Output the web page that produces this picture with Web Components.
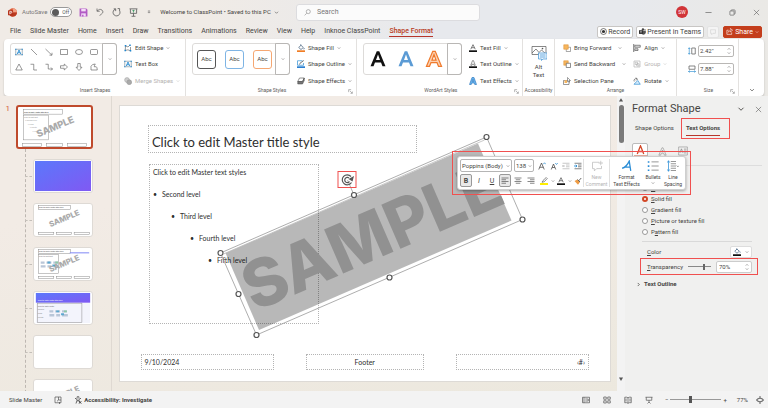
<!DOCTYPE html>
<html lang="en">
<head>
<meta charset="utf-8">
<title>Welcome to ClassPoint</title>
<style>
html,body{height:100%;margin:0}
body{font:6px/8px Roboto,"Liberation Sans",sans-serif;color:#454442;overflow:hidden}
</style>
</head>
<body>
<app-window></app-window>
<script>
const RESET = `*{box-sizing:border-box}button,input,select{font:inherit;color:inherit;margin:0;padding:0;border:0;background:none;min-width:0}button{display:inline-flex;align-items:center;white-space:nowrap}a{color:inherit;text-decoration:none}`;
function define(name, css, html) {
  customElements.define(name, class extends HTMLElement {
    constructor() {
      super();
      const t = document.createElement('template');
      t.innerHTML = `<style>${RESET}${css}</style>${typeof html === 'function' ? html(this) : html}`;
      this.attachShadow({mode: 'open'}).append(t.content.cloneNode(true));
    }
  });
}

/* Icons, all on a 16 by 16 grid */
const S = (d, c = '#555', w = 1.4, f = 'none') => `<path d="${d}" fill="${f}" stroke="${c}" stroke-width="${w}"/>`;
const LETTER = 'M2 13L7 1H9L14 13H11.6L10.4 10H5.6L4.4 13ZM6.4 8H9.6L8 3.6Z';
const ICONS = {
  logo: `<circle cx="8.5" cy="8" r="7.5" fill="#d95a38"/><path d="M8.5.5A7.5 7.5 0 0 1 16 8H8.5Z" fill="#f4a184"/><path d="M1.5 10A7.5 7.5 0 0 0 16 8H8z" fill="#b93a20"/><rect y="4" width="9" height="9" rx="1" fill="#b5331b"/><path d="M3.2 11V6H5.2a1.6 1.6 0 0 1 0 3.2H3.5" fill="none" stroke="#fff" stroke-width="1.3"/>`,
  save: `<path d="M1 1H13L15 3V15H1Z" fill="#b25ac4"/><path d="M4 1.6H12V6H4Z" fill="#f3dcf7"/><path d="M4 9.5H12V15H4Z" fill="#f3dcf7"/><path d="M5.5 12H8V15H5.5Z" fill="#b25ac4"/>`,
  undo: S('M2 1V6.5H7.5M2.4 6.2C5 2.5 9 1.6 12 4.2S14 10 11 12L7 15.4'),
  redo: S('M10 1H13.5V5M13.3 4.5A6.2 6.2 0 1 1 6 2M3 1.5H6.5V5.5'),
  show: S('M1 1.5H15M2.5 2V9.5H13.5V2M8 9.5V14.5M4.5 14.7H11.5','#555') + S('M8 3.5V8M6 5.5L8 3.4 10 5.5','#3a9a62'),
  more: S('M5 5H11','#555',1.2) + S('M5 8L8 11 11 8Z','#555',1.2),
  chev: S('M3 5.5L8 10.5 13 5.5','currentColor',1.8),
  chevr: S('M5.5 3L10.5 8 5.5 13','currentColor',2.4),
  chevu: S('M3 10.5L8 5.5 13 10.5','currentColor',1.8),
  search: `<circle cx="9.8" cy="6" r="4.6" fill="none" stroke="#777" stroke-width="1.2"/>` + S('M6.3 9.6L1.4 14.6','#777',1.2),
  min: S('M1 8H15'),
  restore: S('M2 5.5Q2 4.5 3 4.5H10.5Q11.5 4.5 11.5 5.5V13Q11.5 14 10.5 14H3Q2 14 2 13ZM5 4V3Q5 2 6 2H12Q14 2 14 4V10Q14 11.5 12 11.5'),
  close: S('M2 2L14 14M14 2L2 14','#555',1.3),
  rec: `<circle cx="8" cy="8" r="6.8" fill="none" stroke="#333" stroke-width="1.5"/><circle cx="8" cy="8" r="3.7" fill="#333"/>`,
  teams: `<circle cx="9" cy="3.5" r="2.8" fill="#444"/><circle cx="13.7" cy="4.5" r="1.9" fill="#666"/><path d="M6 7H15.5V11Q15 15 10.5 15.5 6 15 5.5 12Z" fill="#555"/><rect y="4.5" width="9" height="9" rx="1" fill="#333"/>` + S('M2.5 6.8H6.5M4.5 6.8V12','#fff',1.2),
  comment: S('M1.5 2H14.5V11.5H8L4.5 15V11.5H1.5Z','#c4c4c4',1.2),
  share: S('M6 5H2V14.5H13V10M4.5 10.5Q5 6.5 10 6.2V9L15 5 10 1.2V3.8','#fff',1.4),
  tbox: S('M1.5 2.5H14.5V13.5H1.5Z','#6a7f91',1.2) + `<path d="M.3 1.3h2.4v2.4H.3zM13.3 1.3h2.4v2.4h-2.4zM.3 12.3h2.4v2.4H.3zM13.3 12.3h2.4v2.4h-2.4z" fill="#1f86cf"/>` + S('M4.5 12L8 4 11.5 12M5.7 9.5H10.3','#1f86cf',1.7),
  line: S('M2 2L14 14','#555',1.2),
  arrow: S('M1 2L13.5 14M14 9.5V14.3H9','#555',1.2),
  rect: S('M1 3H15V13H1Z','#555',1.2),
  oval: `<ellipse cx="8" cy="8" rx="7" ry="5" fill="none" stroke="#555" stroke-width="1.2"/>`,
  round: `<rect x="1" y="3" width="14" height="10" rx="2" fill="none" stroke="#555" stroke-width="1.2"/>`,
  tri: S('M8 2L14.5 14H1.5Z','#555',1.2),
  elbow: S('M1 2.5H7.5V14H14','#555',1.2),
  elbowa: S('M1 2.5H6.5V12H15M12 9L15 12 12 15','#555',1.2),
  rarrow: S('M1 5.5H8.5V2L15 8 8.5 14V10.5H1Z','#555',1.2),
  darrow: S('M5.5 1H10.5V8.5H14L8 15 2 8.5H5.5Z','#555',1.2),
  free: S('M2 14V6.5Q4 2 10.5 2Q8 6 8.5 7.500H12.5Q14.500 8.500 14.500 14Z','#555',1.2),
  edit: S('M3 3.5L8 6 12 2M3 3.5L2.5 13Q8 10 13 13.5V6','#555',1.2) + `<path d="M1.5 2h3v3h-3zM1 11.5h3v3H1zM11.5 12h3v3h-3zM10.5 1h3v3h-3z" fill="#1f86cf"/>`,
  merge: `<circle cx="6" cy="6" r="4.8" fill="#ccc" stroke="#aaa" stroke-width="1.2"/><circle cx="10.5" cy="10.5" r="4.8" fill="#aaa" stroke="#999" stroke-width="1.2"/>`,
  fill: S('M3.5 7L8 2.5 12.5 7 8 11ZM7.5 3V.5M13.5 8Q15.5 10.5 13.5 10.6','#246', 1.3) + `<path d="M0 12.6H16V16H0Z" fill="#f07d24"/>`,
  fillk: S('M3.5 6.5L8 2 12.5 6.5 8 10.5ZM7.5 3V.5M13.5 7Q15.5 9.5 13.5 9.6','#357',1.3) + `<path d="M0 12.5H16V16H0Z" fill="#111"/>`,
  outline: S('M1 1.5H11M1 1.5V10.5H13V6','#1f86cf',1.3) + S('M5 9L6 6.5 13.5 1','#555',1.6) + `<path d="M0 12.6H16V16H0Z" fill="#2a7fd0"/>`,
  effects: `<path d="M5 2H14.5L11 9H1.5Z" fill="#fff" stroke="#555" stroke-width="1.3"/><path d="M1.5 9H11L14.5 2V7L11 14H1.5Z" fill="#777" stroke="#444"/>`,
  tfill: S('M3.5 10.5L8 1.3 12.5 10.5M5 7.4H11','#555',1.5) + `<path d="M0 12.6H16V16H0Z" fill="#111"/>`,
  toutline: S('M3.5 10.5L7 1.3H9L12.5 10.5H10L9 8H7L6 10.5Z','#555',1.2) + `<path d="M0 12.6H16V16H0Z" fill="#111"/>`,
  teffects: `<path d="M1 15L6 1H10L15 15H11.5L10.5 12H5.5L4.5 15ZM6.5 9H9.5L8 4.5Z" fill="#6cb5ee" stroke="#1668b5" stroke-width="1.1"/>`,
  artk: `<path d="${LETTER}" fill="#111"/>`,
  artb: `<path d="${LETTER}" fill="#5b9bd5"/>`,
  arto: `<path d="${LETTER}" fill="#fbd2b4" stroke="#f07a2c" stroke-width="1"/>`,
  alt: `<path d="M1 1.5H15V9.5H1Z" fill="#fff" stroke="#555" stroke-width=".7"/><path d="M1 8L5 4 8 7.5 10.5 5 15 9" fill="none" stroke="#555" stroke-width=".7"/><circle cx="11.5" cy="3.6" r=".8" fill="#555"/><path d="M7.5 8H16V14H12L10.5 15.5V14H7.5Z" fill="#eaf4fd" stroke="#3c93d6" stroke-width=".7"/>` + S('M9 10H14.5M9 12H14.5','#3c93d6',.7),
  fwd: `<path d="M6.5 6.5H15V15H6.5Z" fill="#fff" stroke="#555"/><path d="M1.5 1.5H10.5V10.5H1.5Z" fill="#f6b55d" stroke="#dc8c2d"/>`,
  back: `<path d="M1.5 1.5H10.5V10.5H1.5Z" fill="#f6b55d" stroke="#dc8c2d"/><path d="M6.5 6.5H15V15H6.5Z" fill="#fff" stroke="#555" stroke-width="1.3"/>`,
  pane: `<path d="M1 7H12V15H1Z" fill="#fff" stroke="#555" stroke-width="1.2"/><path d="M3 6.5H8V12H3Z" fill="#f6b55d"/><path d="M9 1L15 7H12L13.5 10 12 10.5 10.8 8 9 9.5Z" fill="#fff" stroke="#444"/>`,
  align: S('M1.5 0V16','#444',1.5) + S('M3.5 2.5H14.5V6.5H3.5ZM3.5 9.5H10V13H3.5Z','#555',1.3,'#dedede'),
  group: S('M2 2H14V14H2ZM4.5 4.5H9V9H4.5ZM7.5 7.5H12V12H7.5Z','#aaa',1.2),
  rotate: S('M2 14.5H14.5L9.5 7Z','#1f86cf',1.3,'#d9edfc') + S('M8.5 4A4 4 0 0 0 2.5 9M5.5 1.5L9 4 6 7','#555',1.3),
  height: S('M2.5 1.5V14.5M.5 4L2.5 1.5 4.5 4M.5 12L2.5 14.5 4.5 12','#1f86cf',1.2) + S('M7.5 2H14.5V14H7.5Z'),
  width: S('M2 2H14V8.5H2Z') + S('M1 13H15M3.5 11L1 13 3.5 15M12.5 11L15 13 12.5 15','#1f86cf',1.2),
  launch: S('M2 10V2H10M6 6L13 13M14 8V14H8','#555',1.3),
  grow: S('M1.5 15L7 2 12.5 15M3.5 10.5H10.5','#444',1.5) + S('M10.5 4.5L13 1.5 15.5 4.5','#1f86cf',1.4),
  shrink: S('M2.5 15L7 4 11.5 15M4.3 11H9.7','#444',1.5) + S('M10.5 2L13 5 15.5 2','#1f86cf',1.4),
  dedent: S('M1 2.5H15M8 6H15M8 9.5H15M1 13.5H15M6 8H1M3 6L1 8 3 10','#aaa',1.3),
  indent: S('M1 2.5H15M8 6H15M8 9.5H15M1 13.5H15') + S('M0 8H5.5M3.5 5.5L6 8 3.5 10.5','#1f86cf',1.7),
  aleft: S('M1 2H15M1 5.5H10M1 9H15M1 12.5H10'),
  acenter: S('M1 2H15M3.5 5.5H12.5M1 9H15M3.5 12.5H12.5'),
  aright: S('M1 2H15M6 5.5H15M1 9H15M6 12.5H15'),
  hilite: S('M4 10.5L6 7 12.5 1 14.5 3 8.5 9.5Z','#555',1.3) + `<path d="M0 12H16V16H0Z" fill="#ffee00"/>`,
  brush: `<path d="M1 8L7 5 12 10 8 15.5Z" fill="#ee9b43"/>` + S('M7 5L12 10M9.5 7.5L14.5 2','#666',2),
  newc: S('M11 3H2V11.500H4.500V14.500L7.500 11.500H14V8M13 1V7M10 4H16','#bbb',1),
  fte: S('M1.5 11Q7 10 11 1.5L13 14.5M5 9.5H12.2','#2b8dd6',1.7),
  bullets: S('M6 2.5H15.5M6 8H15.5M6 13.5H15.5','#666',.9) + `<path d="M1 1.5h2.2v2.2H1zM1 7h2.2v2.2H1zM1 12.5h2.2v2.2H1z" fill="#2b8dd6"/>`,
  spacing: S('M5 2H12M5 5H12M5 8H12M5 11H12M5 14H12','#666',.9) + S('M2 1V15M.3 3.5L2 1 3.7 3.5M.3 12.5L2 15 3.7 12.5','#2b8dd6',1) + S('M13 7.500L14.500 9 16 7.500','#555',.9),
  tA: S('M4 11L8 1 12 11M5.3 8H10.7','#d24726',1.6) + `<path d="M0 13H16V16H0Z" fill="#d24726"/>`,
  tB: S('M1.5 14.5L7 1.5H9L14.5 14.5H11.5L10 11H6L4.5 14.5ZM7 8.5H9L8 5.5Z','#888',1),
  tC: S('M1 1.5H15V14.5H1Z','#888',.9) + S('M3 11L5.5 4.5 8 11M4 9H7M9.5 5H13.5M9.5 8H13.5M9.5 11H13.5','#777',1),
  notes: S('M2 2H14V13.5H2ZM9 2V8L6 10.5M9 8L14 8') + S('M11 12V16','#555',1.5),
  access: `<circle cx="8" cy="2.5" r="2" fill="none" stroke="#444" stroke-width="1.3"/>` + S('M2 4.5L6 6.5V9L4 15M14 4.5L10 6.5V9L12 15M6 9.5H10','#444',1.6) + S('M10 10L15 15M15 10L10 15','#444',1.6),
  normal: S('M1 2.5H15V13.5H1ZM4 2.5V13.5M6.5 6H12.5V10H6.5') ,
  sorter: S('M1.5 2H6.5V6.5H1.5ZM9.5 2H14.5V6.5H9.5ZM1.5 9.5H6.5V14H1.5ZM9.5 9.5H14.5V14H9.5Z'),
  reading: S('M8 3.5Q4.5 1.5 1.5 2.5V13.5Q5 12.5 8 14.5 11 12.5 14.5 13.5V2.5Q11.5 1.5 8 3.5ZM8 3.5V14.5M4 5V11M12 5V11'),
  slideshow: S('M1 2.5H15M2.5 2.5V8.5H13.5V2.5M8 8.5V12M5 15L8 12 11 15'),
  fit: S('M3.5 5H12.5V11H3.5Z','#444',1.4) + `<path d="M8 0L10.5 3H5.5ZM8 16L5.5 13H10.5ZM0 8L2.5 5.5V10.5ZM16 8L13.5 10.5V5.5Z" fill="#444"/>`,
  up: `<path d="M8 3L13.5 12H2.5Z" fill="#555"/>`,
  down: `<path d="M8 13L2.5 4H13.5Z" fill="#555"/>`
};
customElements.define('ui-icon', class extends HTMLElement {
  constructor() { super(); this.attachShadow({mode: 'open'}); }
  connectedCallback() {
    const s = this.getAttribute('size') || 8;
    this.shadowRoot.innerHTML = `<style>:host{display:inline-block;flex:none;width:${s}px;height:${s}px}svg{display:block;width:100%;height:100%}</style><svg viewBox="0 0 16 16" aria-hidden="true">${ICONS[this.getAttribute('name')] || ''}</svg>`;
  }
});
const I = (n, s = 8) => `<ui-icon name="${n}" size="${s}"></ui-icon>`;

/* Ribbon pieces */
customElements.define('ribbon-command', class extends HTMLElement {
  constructor() { super(); this.attachShadow({mode: 'open'}); }
  connectedCallback() {
    const menu = this.hasAttribute('menu');
    this.shadowRoot.innerHTML = `<style>${RESET}:host{display:block}button{gap:3px;height:9px}button:disabled{color:#b5b3b1}:host([wide]) .m{margin-left:4px}.m{display:flex}</style>
      <button ${this.hasAttribute('off') ? 'disabled' : ''}>${I(this.getAttribute('icon'))}<slot></slot>${menu ? `<span class="m">${I('chev', 4)}</span>` : ''}</button>`;
  }
});
define('command-list', `:host{display:flex;flex-direction:column;gap:6px;align-items:flex-start}`, `<slot></slot>`);
customElements.define('ribbon-group', class extends HTMLElement {
  constructor() { super(); this.attachShadow({mode: 'open'}); }
  connectedCallback() {
    this.shadowRoot.innerHTML = `<style>${RESET}:host{display:grid;grid-template-rows:1fr 8px;padding:4px 6px 2px;min-width:0;position:relative;border-right:1px solid #e3e1df}
      .body{display:flex;gap:7px;align-items:flex-start}.foot{display:flex;justify-content:center;color:#5c5a58;font-size:5px;line-height:7px;white-space:nowrap}
      .l{position:absolute;right:3px;bottom:3px}:host([tight]){padding-inline:1px}:host([tight]) .body{justify-content:center}</style>
      <div class="body"><slot></slot></div><div class="foot">${this.getAttribute('label')}</div>${this.hasAttribute('launcher') ? `<button class="l" aria-label="${this.getAttribute('label')} options">${I('launch', 5)}</button>` : ''}`;
  }
});
define('gallery-box', `:host{display:flex;flex:none;height:32px;border:1px solid #dddbd9;border-radius:3px;background:#fff}
  .items{flex:1;display:flex;align-items:center;justify-content:center}.drop{width:15px;border:1px solid #b9b7b5;border-radius:0 3px 3px 0;margin:-1px;justify-content:center}`,
  `<div class="items"><slot></slot></div><button class="drop" aria-label="More styles">${I('chev', 4)}</button>`);
define('shape-grid', `:host{display:grid;grid-template-columns:repeat(6,8px);gap:7px;padding:0 5px 0 4px}`,
  ['tbox','line','arrow','rect','oval','round','tri','elbow','elbowa','rarrow','darrow','free'].map(n => `<button aria-label="${n}">${I(n)}</button>`).join(''));
define('style-swatches', `:host{display:flex;gap:9px;padding:0 4px}button{width:19px;height:19px;border:1px solid #555;border-radius:3px;justify-content:center;font-size:6px}button:nth-of-type(2){border-color:#7eb4e4}button:nth-of-type(3){border-color:#f5a772}`,
  `<button>Abc</button><button>Abc</button><button>Abc</button>`);
define('art-swatches', `:host{display:flex;gap:8px;padding:2px 4px 0}`, `<button aria-label="Black">${I('artk',20)}</button><button aria-label="Blue">${I('artb',20)}</button><button aria-label="Orange">${I('arto',20)}</button>`);
define('size-fields', `:host{display:grid;gap:6px;padding:2px 0 0 5px}label{display:flex;align-items:center;gap:2px}.f{display:flex;align-items:center;width:36px;height:12px;border:1px solid #b9b7b5;border-radius:2px;padding:0 2px 0 1px}input{width:100%;flex:1}.s{display:grid}`,
  `<label>${I('height')}<span class="f"><input aria-label="Height" value='2.42"'><span class="s">${I('chevu',4)}${I('chev',4)}</span></span></label>
   <label>${I('width')}<span class="f"><input aria-label="Width" value='7.88"'><span class="s">${I('chevu',4)}${I('chev',4)}</span></span></label>`);
define('alt-text', `:host{display:block}button{flex-direction:column;line-height:8px;padding-top:2px}ui-icon{margin-bottom:2px}`, `<button>${I('alt',16)}<span>Alt</span><span>Text</span></button>`);
define('pp-ribbon', `:host{display:grid;grid-template-columns:182fr 171fr 166fr 32fr 122fr 62fr 25fr;margin:0 4px;height:57px;background:#fff;border-radius:4px;box-shadow:0 1px 2px #0003;position:relative}
  .cols{display:flex;gap:7px;padding-left:2px}.end{display:flex;justify-content:center;align-items:flex-end;padding:0 0 4px}`,
  `<ribbon-group label="Insert Shapes"><gallery-box><shape-grid></shape-grid></gallery-box><command-list><ribbon-command icon="edit" menu>Edit Shape</ribbon-command><ribbon-command icon="tbox">Text Box</ribbon-command><ribbon-command icon="merge" menu off>Merge Shapes</ribbon-command></command-list></ribbon-group>
  <ribbon-group label="Shape Styles" launcher><gallery-box><style-swatches></style-swatches></gallery-box><command-list><ribbon-command icon="fill" menu>Shape Fill</ribbon-command><ribbon-command icon="outline" menu>Shape Outline</ribbon-command><ribbon-command icon="effects" menu>Shape Effects</ribbon-command></command-list></ribbon-group>
  <ribbon-group label="WordArt Styles" launcher><gallery-box><art-swatches></art-swatches></gallery-box><command-list><ribbon-command icon="tfill" menu>Text Fill</ribbon-command><ribbon-command icon="toutline" menu>Text Outline</ribbon-command><ribbon-command icon="teffects" menu>Text Effects</ribbon-command></command-list></ribbon-group>
  <ribbon-group label="Accessibility" tight><alt-text></alt-text></ribbon-group>
  <ribbon-group label="Arrange"><div class="cols"><command-list><ribbon-command icon="fwd" menu wide>Bring Forward</ribbon-command><ribbon-command icon="back" menu wide>Send Backward</ribbon-command><ribbon-command icon="pane">Selection Pane</ribbon-command></command-list><command-list><ribbon-command icon="align" menu>Align</ribbon-command><ribbon-command icon="group" menu off>Group</ribbon-command><ribbon-command icon="rotate" menu>Rotate</ribbon-command></command-list></div></ribbon-group>
  <ribbon-group label="Size" launcher><size-fields></size-fields></ribbon-group>
  <div class="end"><button aria-label="Collapse ribbon">${I('chev',6)}</button></div>`);

/* Window frame */
define('title-bar', `:host{display:grid;grid-template-columns:288px minmax(100px,184px) 1fr;gap:8px;height:24px;align-items:center}
  .l,.r{display:flex;align-items:center}.l{padding-left:8px;white-space:nowrap}.auto{color:#777;margin:0 3px 0 5px}
  .sw{display:flex;align-items:center;gap:3px;width:22px;height:10px;border:1px solid #999;border-radius:5px;background:#fff;padding:0 1px;font-size:5px;color:#555}.sw i{width:7px;height:7px;border-radius:50%;background:#5b5b5b}
  .q{display:flex;gap:8px;margin:0 8px 0 7px}.doc{gap:3px}
  .s{display:flex;align-items:center;gap:6px;height:17px;padding:0 7px;background:#fbfbfb;border:1px solid #dcdcdf;border-radius:3px;font-size:7px}input{flex:1;outline:0}input::placeholder{color:#777;opacity:1}
  .r{justify-content:flex-end;gap:17px;padding-right:8px}.me{width:12px;height:12px;border-radius:50%;background:#d13438;color:#fff;font-size:5px;justify-content:center}`,
  `<div class="l">${I('logo',9)}<span class="auto">AutoSave</span><button class="sw" role="switch" aria-checked="false" aria-label="AutoSave"><i></i>Off</button>
   <span class="q"><button aria-label="Save">${I('save',9)}</button><button aria-label="Undo">${I('undo',8)}</button><button aria-label="Redo">${I('redo',9)}</button><button aria-label="Present">${I('show',9)}</button><button aria-label="More">${I('more',6)}</button></span>
   <button class="doc">Welcome to ClassPoint • Saved to this PC ${I('chev',5)}</button></div>
   <label class="s">${I('search',7)}<input placeholder="Search" aria-label="Search"></label>
   <div class="r"><button class="me">SW</button><button aria-label="Minimise">${I('min',7)}</button><button aria-label="Restore">${I('restore',7)}</button><button aria-label="Close">${I('close',7)}</button></div>`);
define('ribbon-tabs', `:host{display:flex;align-items:center;justify-content:space-between;height:15px;padding:0 6px 0 10px;font-size:7px;line-height:10px}
  nav{display:flex;gap:9px;white-space:nowrap}nav a{border-bottom:1px solid transparent}.on{color:#b83b1d;border-color:#b7352b;font-weight:500}
  .r{display:flex;gap:3px}.r button{height:12px;gap:1px;padding:0 2px;border:1px solid #c8c6c4;border-radius:2px;background:#fff}.r .c{border-color:#e3e3e3;background:#f4f4f4;margin-right:1px}.r .share{background:#c43e1c;border-color:#c43e1c;color:#fff;gap:2px}`,
  `<nav><a href="#">File</a><a href="#">Slide Master</a><a href="#">Home</a><a href="#">Insert</a><a href="#">Draw</a><a href="#">Transitions</a><a href="#">Animations</a><a href="#">Review</a><a href="#">View</a><a href="#">Help</a><a href="#">Inknoe ClassPoint</a><a href="#" class="on">Shape Format</a></nav>
   <div class="r"><button>${I('rec',7)}Record</button><button>${I('teams',7)}Present in Teams</button><button class="c" aria-label="Comments">${I('comment',6)}</button><button class="share">${I('share',7)}<span>Share</span>${I('chev',4)}</button></div>`);

/* Thumbnails of slides */
const mark = (x, y, s) => `<text x="${x}" y="${y}" font-family="Inter,sans-serif" font-weight="800" font-size="${s}" fill="#aaa" transform="rotate(-23 ${x} ${y})">SAMPLE</text>`;
const box = (x, y, w, h) => `<rect x="${x}.5" y="${y}.5" width="${w}" height="${h}" fill="none" stroke="#888" stroke-width=".5"/>`;
const tiny = (x, y, t, c = '#444', s = 2) => `<text x="${x}" y="${y}" font-size="${s}" fill="${c}" font-family="Lato,sans-serif">${t}</text>`;
const foot3 = box(3,29,16,2)+box(22,29,15,2)+box(40,29,16,2);
const GRAD = `<defs><linearGradient id="g" x2="1" y2="1"><stop stop-color="#5b78fb"/><stop offset="1" stop-color="#8059f3"/></linearGradient></defs>`;
const pic = (x, y) => `<path d="M${x} ${y}h4m2 0h5m2 0h5M${x} ${y+4}h5m2 0h4m2 0h6" stroke="#b9c6d8" stroke-width="2.4"/><path d="M${x+7} ${y}h3m2 3h3" stroke="#5aa7cf" stroke-width="2"/><path d="M${x+15} ${y}h3" stroke="#8dc9a7" stroke-width="2"/>`;
const THUMBS = {
  master: `<svg viewBox="0 0 74 42">${box(4,2,41,5)+box(4,8,26,26)+box(3,38,20,3)+box(28,38,17,3)+box(50,38,20,3)+tiny(5,6,'Click to edit Master title style','#222')+tiny(5,12,'Click to edit text','#888')+tiny(6,15,'• Second level','#999')+tiny(9,19,'• Third','#999')+tiny(11,22,'• Fourth','#999')+tiny(14,26,'• Fifth','#999')+mark(20,32,10)}</svg>`,
  grad: `<svg viewBox="0 0 58 33" preserveAspectRatio="none">${GRAD}<rect x="1" y="1" width="56" height="31" fill="url(#g)"/></svg>`,
  title: `<svg viewBox="0 0 58 33">${box(3,1,33,4)+tiny(4,4,'Click to edit Master title style')+mark(16,24,8)+foot3}</svg>`,
  content: `<svg viewBox="0 0 58 33">${box(3,1,33,4)+tiny(4,4,'Click to edit Master title style')+box(3,6,21,20)+tiny(4,9,'Click to edit text','#777')+`<path d="M36 5H56" stroke="#7b83f5"/>`+pic(6,15)+mark(16,25,8)+foot3}</svg>`,
  banner: `<svg viewBox="0 0 58 33">${GRAD}<rect x="1" y="1" width="56" height="31" fill="#f3f4fc"/><rect x="1" y="1" width="56" height="10" fill="url(#g)"/>${tiny(3,9,'Click to edit Master title style','#fff')+box(2,11,46,20)+tiny(3,15,'Click to edit Master','#666')+tiny(3,19,'Second','#888')+tiny(3,23,'Third','#888')+tiny(3,27,'Fourth','#888')+pic(15,20)}</svg>`,
  blank: ``,
  last: `<svg viewBox="0 0 58 33">${mark(16,24,8)+foot3}</svg>`
};
customElements.define('slide-thumb', class extends HTMLElement {
  constructor() { super(); this.attachShadow({mode: 'open'}); }
  connectedCallback() {
    this.shadowRoot.innerHTML = `<style>${RESET}:host{display:block;position:relative;height:34px}button{display:block;width:100%;height:100%;background:#fff;border:1px solid #dedad5;border-radius:3px;overflow:hidden;padding:0}svg{display:block;width:100%;height:100%}
    :host([on]){height:44px}:host([on]) button{border:2px solid #bf4a2c}:host(:not([on]))::before{content:"";position:absolute;left:-8px;width:7px;top:50%;border-top:1px dashed #c4bfb9}</style><button aria-label="Slide ${this.getAttribute('kind')}">${THUMBS[this.getAttribute('kind')]}</button>`;
  }
});
define('thumb-list', `:host{display:grid;grid-template-columns:16px 77px;padding-top:9px;overflow:hidden;border-right:1px solid #dfd9d2;align-content:start;min-height:0}
  .n{color:#d2573a;font-size:8px;text-align:right;padding-right:6px}.kids{grid-column:2;margin-left:9px;padding:10px 0 0 7px;border-left:1px dashed #bdb7b1;display:grid;gap:10px}`,
  `<span class="n">1</span><slide-thumb kind="master" on></slide-thumb><div class="kids">${['grad','title','content','banner','blank','last'].map(k=>`<slide-thumb kind="${k}"></slide-thumb>`).join('')}</div>`);

/* Slide being edited: a free canvas, coordinates in the slide's own units */
define('slide-canvas', `:host{display:block;position:relative;background:#fff;border:1px solid #dddad6;font-family:Lato,"Open Sans",sans-serif;color:#2e2e2e;min-width:0}
  .ph{position:absolute;border:1px dotted #b4b4b4;display:flex;align-items:center;padding:0 3px;white-space:nowrap}
  .title{left:5.7%;top:7%;width:55%;height:10%;font-size:13px;line-height:16px;font-weight:400;align-items:flex-end;padding-bottom:2px}
  .body{left:5.9%;top:21%;width:34.8%;height:58.4%;font-size:7px;line-height:10px;display:block;padding:2px 3px}
  ul{list-style:none;margin:0;padding:0;display:grid;grid-auto-rows:10px;gap:12px}li::before{content:"•";display:inline-block;width:9px}li.p::before{content:none}
  li:nth-child(3){padding-left:18px}li:nth-child(4){padding-left:37px}li:nth-child(5){padding-left:55px}
  .f{top:90.2%;height:5.8%;font-size:7px;line-height:8px}.d{left:4.2%;width:27.2%}.c{left:37.9%;width:24.1%;justify-content:center}.n{left:68.5%;width:27.2%;justify-content:flex-end}
  svg{position:absolute;inset:-1px;width:calc(100% + 2px);height:calc(100% + 2px);overflow:visible}`,
  `<div class="ph title">Click to edit Master title style</div>
  <div class="ph body"><ul><li class="p">Click to edit Master text styles</li><li>Second level</li><li>Third level</li><li>Fourth level</li><li>Fifth level</li></ul></div>
  <div class="ph f d">9/10/2024</div><div class="ph f c">Footer</div><div class="ph f n">‹#›</div>
  <svg viewBox="120 105 491 277"><path d="M226 253L478.5 143.5 512 220.5 259.5 330Z" fill="#000" fill-opacity=".28"/>
  <text x="255" y="312" transform="rotate(-23.4 255 312)" font-family="Inter,sans-serif" font-weight="800" font-size="66" fill="#919191">SAMPLE</text>
  <g fill="none" stroke="#999" stroke-width=".8"><path d="M221 253L487 137 523 219.5 257 335Z"/><path d="M224 254L485 140" stroke="#bbb"/><path d="M354.5 195L348 180"/></g>
  <g fill="#fff" stroke="#555" stroke-width="1.2">${[[221,253],[487,137],[523,219.5],[257,335],[354.5,195],[239,294],[390,277.5]].map(p=>`<circle cx="${p[0]}" cy="${p[1]}" r="2.5"/>`).join('')}
  <path d="M352 182.500A5 5 0 1 1 351.500 176.500M350 181.500A2.600 2.600 0 1 1 349.500 178" fill="none"/></g>
  <path d="M349 179L354.5 176 353 181.500Z" fill="#555"/><rect x="338.500" y="171.500" width="18" height="16" fill="none" stroke="#f0504f"/></svg>`);
define('edit-stage', `:host{display:grid;grid-template-columns:1fr 8px;min-width:0;min-height:0}.s{display:grid;padding:9px 6px 9px 7px}.bar{background:#f3f3f3;display:flex;flex-direction:column;align-items:center;justify-content:space-between;padding:1px 0 9px}.bar i{width:5px;height:38px;border-radius:3px;background:#7a7a7a}.t{display:grid;gap:2px;justify-items:center}`,
  `<div class="s"><slide-canvas></slide-canvas></div><div class="bar"><span class="t">${I('up',6)}<i></i></span>${I('down',6)}</div>`);

/* Format pane */
define('format-pane', `:host{display:block;background:#f0f0ef;padding:6px 6px 0 7px;min-width:0}
  header{display:flex;align-items:center;gap:10px;font-size:11px;line-height:14px}h2{font:inherit;margin:0;flex:1}
  .tabs{display:flex;margin-top:2px;line-height:9px}.tabs a{height:21px;padding:5px 6px 0 3px}.tabs .on{border:1px solid #f0504f;font-weight:700;padding:4px 9px 0 4px;margin-left:1px}.on span{display:block;padding-bottom:3px;border-bottom:1px solid #b7352b}
  .ic{display:flex;gap:7px;height:27px;padding-top:4px;align-items:flex-start;border-bottom:1px solid #ddd}.ic button{width:14px;height:16px;justify-content:center}.ic .on{background:#fff;border:1px solid #bbb;border-radius:2px;width:16px}
  .fill{padding:18px 10px 0 10px}.radios{display:grid;gap:3px;padding-bottom:5px;border-bottom:1px solid #d9d9d9}.radios label{display:flex;align-items:center;gap:3px;height:8px}
  input[type=radio]{appearance:none;width:6px;height:6px;border:1px solid #999;border-radius:50%;background:#fff}input[type=radio]:checked{border:2px solid #d24726}
  .row{display:flex;align-items:center;justify-content:space-between;padding-left:5px}.col{height:16px;padding-top:4px}.col button{width:22px;height:12px;background:#fff;border:1px solid #ddd;border-radius:2px;justify-content:center;gap:4px}
  .tr{border:1px solid #f0504f;height:17px;margin:0 -6px 0 -2px;padding:0 5px 0 6px}
  input[type=range]{appearance:none;width:23px;height:8px;background:linear-gradient(#888,#888) center/100% 1px no-repeat}input[type=range]::-webkit-slider-thumb{appearance:none;width:2px;height:6px;background:#666}
  .num{display:flex;align-items:center;width:36px;height:12px;background:#fff;border:1px solid #ccc;border-radius:2px;padding:0 2px}.num input{flex:1;width:100%}.num span{display:grid}
  .out{display:flex;align-items:center;gap:3px;font-weight:700;margin:5px 0 0 4px}u{text-underline-offset:1px;text-decoration-thickness:1px}`,
  `<header><h2>Format Shape</h2><button aria-label="Options">${I('chev',8)}</button><button aria-label="Close pane">${I('close',7)}</button></header>
  <div class="tabs"><a href="#">Shape Options</a><a href="#" class="on"><span>Text Options</span></a></div>
  <div class="ic"><button class="on" aria-label="Text fill and outline">${I('tA',13)}</button><button aria-label="Text effects">${I('tB',9)}</button><button aria-label="Text box">${I('tC',10)}</button></div>
  <div class="fill"><div class="radios"><label><input type="radio" name="f"><span><u>N</u>o fill</span></label><label><input type="radio" name="f" checked><span><u>S</u>olid fill</span></label><label><input type="radio" name="f"><span><u>G</u>radient fill</span></label><label><input type="radio" name="f"><span><u>P</u>icture or texture fill</span></label><label><input type="radio" name="f"><span>P<u>a</u>ttern fill</span></label></div>
  <div class="row col"><span><u>C</u>olor</span><button aria-label="Color">${I('fillk',8)}${I('chev',4)}</button></div>
  <div class="row tr"><label for="t"><u>T</u>ransparency</label><input id="t" type="range" value="70"><span class="num"><input aria-label="Transparency value" value="70%"><span>${I('chevu',4)}${I('chev',4)}</span></span></div></div>
  <button class="out">${I('chevr',5)}Text Outline</button>`);

/* Floating toolbar, laid over the slide and the pane */
define('mini-toolbar', `:host{display:flex;border:1px solid #f0504f;padding:4px}
  .t{flex:1;min-width:0;display:flex;background:#fff;border:1px solid #cfcfcf;border-radius:3px;box-shadow:0 1px 3px #0005;padding:2px}
  .rows{flex:none;display:grid;grid-template-rows:13px 13px;gap:2px;width:123px}.a{display:flex;align-items:center;gap:4px}
  .sel{display:flex;align-items:center;height:13px;border:1px solid #b5b5b5;border-radius:2px;padding:0 1px}.sel select{appearance:none;flex:1;width:100%}.f{width:52px}.z{width:20px;margin-left:-2px}
  .b{width:11px;height:13px;justify-content:center;border:1px solid transparent;border-radius:2px;font-size:7px}.on{background:#e9e9e9;border-color:#999}.r2{gap:0}.r2 .b{width:12px;margin-right:1px}
  .big{flex:none;flex-direction:column;width:27px;line-height:7px;padding-top:1px;font-size:5px;justify-content:flex-start}.big ui-icon{margin-bottom:2px}.big:disabled{color:#b5b5b5;border:solid #e0e0e0;border-width:0 1px}.w{width:33px}.n{width:20px}.n .c{height:7px;line-height:5px}`,
  `<div class="t"><div class="rows"><div class="a"><span class="sel f"><select aria-label="Font"><option>Poppins (Body)</option></select>${I('chev',4)}</span><span class="sel z"><select aria-label="Font size"><option>138</option></select>${I('chev',4)}</span><button aria-label="Grow font">${I('grow',8)}</button><button aria-label="Shrink font">${I('shrink',8)}</button><button aria-label="Decrease indent">${I('dedent',8)}</button><button aria-label="Increase indent">${I('indent',8)}</button></div>
  <div class="a r2"><button class="b on"><b>B</b></button><button class="b"><i>I</i></button><button class="b"><u>U</u></button><button class="b on" aria-label="Align left">${I('aleft',8)}</button><button class="b" aria-label="Center">${I('acenter',8)}</button><button class="b" aria-label="Align right">${I('aright',8)}</button><button class="b" aria-label="Highlight">${I('hilite',8)}</button>${I('chev',4)}<button class="b" aria-label="Font color">${I('tfill',8)}</button>${I('chev',4)}<button class="b" aria-label="Format painter">${I('brush',8)}</button></div></div>
  <button class="big" disabled>${I('newc',12)}<span>New</span><span>Comment</span></button><button class="big w">${I('fte',12)}<span>Format</span><span>Text Effects</span></button><button class="big n">${I('bullets',12)}<span>Bullets</span><span class="c">${I('chev',4)}</span></button><button class="big n">${I('spacing',12)}<span>Line</span><span>Spacing</span></button></div>`);

define('status-bar', `:host{display:flex;align-items:center;height:17px;background:#f3f3f3;padding:0 4px 0 9px;white-space:nowrap;position:relative}
  .l,.r,.v,.z{display:flex;align-items:center}.l{flex:1;gap:12px}.acc{gap:2px;font-weight:700}.v{gap:13px;margin-right:12px}.z{gap:2px;margin-right:10px}
  input{appearance:none;width:51px;height:8px;background:linear-gradient(#999,#999) center/100% 1px no-repeat}input::-webkit-slider-thumb{appearance:none;width:3px;height:7px;background:#555}.p{margin-right:8px}`,
  `<div class="l"><span>Slide Master</span><button aria-label="Notes">${I('notes',8)}</button><button class="acc">${I('access',8)}Accessibility: Investigate</button></div>
  <div class="r"><span class="v"><button aria-label="Normal">${I('normal',8)}</button><button aria-label="Slide sorter">${I('sorter',8)}</button><button aria-label="Reading view">${I('reading',8)}</button><button aria-label="Slide show">${I('slideshow',8)}</button></span>
  <span class="z"><button aria-label="Zoom out">−</button><input type="range" aria-label="Zoom" min="0" max="100" value="38"><button aria-label="Zoom in">+</button></span><span class="p">77%</span><button aria-label="Fit slide">${I('fit',8)}</button></div>`);

define('app-window', `:host{display:grid;grid-template-rows:24px 15px 57px minmax(0,1fr) 17px;height:100vh;background:linear-gradient(100deg,#f0ebe6 0%,#f0ebe6 25%,#e7e9ed 52%,#e7e9ed 75%,#ece9e2 100%)}
  main{display:grid;grid-template-columns:112px minmax(0,1fr) 143px;position:relative;background:linear-gradient(170deg,#f2ebe5 30%,#ece8de 95%);min-height:0}
  mini-toolbar{position:absolute;right:77px;top:55px;width:239px;height:44px}`,
  `<title-bar></title-bar><ribbon-tabs></ribbon-tabs><pp-ribbon></pp-ribbon><main><thumb-list></thumb-list><edit-stage></edit-stage><format-pane></format-pane><mini-toolbar></mini-toolbar></main><status-bar></status-bar>`);
</script>
</body>
</html>
